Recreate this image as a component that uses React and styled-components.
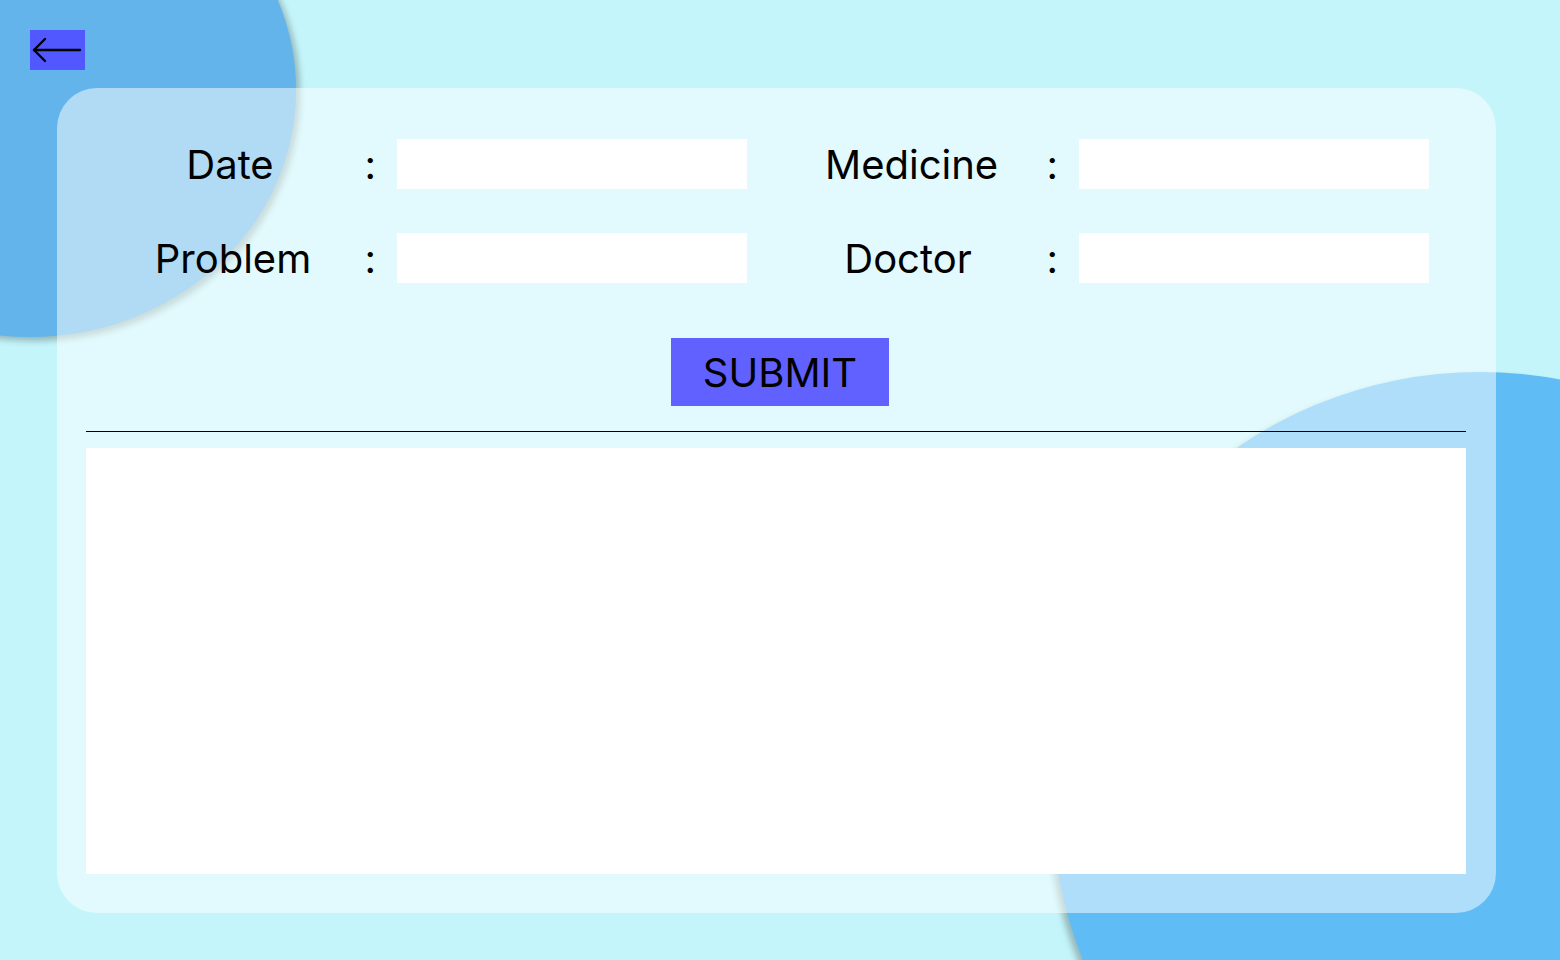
import React, { useState } from 'react';
import styled, { createGlobalStyle } from 'styled-components';

const GlobalStyle = createGlobalStyle`
	html, body {
		margin: 0;
		padding: 0;
	}
	body {
		font-family: Inter, "Noto Sans", sans-serif;
		color: #000;
	}
	* {
		box-sizing: border-box;
	}
`;

const Page = styled.div`
	position: relative;
	width: 100vw;
	height: 100vh;
	overflow: hidden;
	background: #c4f5fa;
`;

const Blob = styled.div`
	position: absolute;
	border-radius: 50%;
	background: ${({ color }) => color};
	box-shadow: ${({ shadow }) => shadow};
	width: ${({ w }) => w}px;
	height: ${({ h }) => h}px;
	left: ${({ x }) => x}px;
	top: ${({ y }) => y}px;
`;

const Main = styled.div`
	position: relative;
	z-index: 1;
	display: flex;
	flex-direction: column;
	align-items: flex-start;
	padding: 30px 0 0 30px;
`;

const BackButton = styled.button`
	display: flex;
	align-items: center;
	justify-content: center;
	width: 55px;
	height: 40px;
	padding: 0;
	border: none;
	background: #5158ff;
	cursor: pointer;
`;

const Card = styled.div`
	display: flex;
	flex-direction: column;
	width: 1439px;
	height: 825px;
	margin: 18px 0 0 27px;
	padding: 51px 30px 39px 29px;
	border-radius: 40px;
	background: rgba(255, 255, 255, 0.5);
`;

const Form = styled.div`
	display: grid;
	grid-template-columns: repeat(2, auto);
	justify-content: start;
	column-gap: 78px;
	row-gap: 44px;
	margin-left: 57px;
`;

const Field = styled.div`
	display: grid;
	grid-template-columns: 180px 74px 350px;
	align-items: center;
`;

const Label = styled.label`
	font-size: 40px;
	text-align: center;
	padding-right: ${({ shift }) => shift || 0}px;
`;

const Colon = styled.span`
	font-size: 40px;
	text-align: right;
	padding-right: 21px;
`;

const TextInput = styled.input`
	width: 350px;
	height: 50px;
	border: none;
	outline: none;
	background: #fff;
	padding: 0 12px;
	font-family: inherit;
	font-size: 24px;
`;

const SubmitButton = styled.button`
	width: 218px;
	height: 68px;
	margin: 55px 0 0 585px;
	border: none;
	background: #6161ff;
	color: #000;
	font-family: inherit;
	font-size: 40px;
	cursor: pointer;
`;

const Divider = styled.hr`
	width: 100%;
	height: 1px;
	margin: 25px 0 0;
	border: none;
	background: #000;
`;

const Results = styled.div`
	flex: 1;
	margin-top: 16px;
	background: #fff;
`;

const fields = [
	{ key: 'date', label: 'Date', shift: 6 },
	{ key: 'medicine', label: 'Medicine', shift: 20 },
	{ key: 'problem', label: 'Problem' },
	{ key: 'doctor', label: 'Doctor', shift: 14 },
];

export default () => {
	const [values, setValues] = useState({});
	return (
		<Page>
			<GlobalStyle />
			<Blob color="#62b4ea" w={532} h={494} x={-236} y={-157} shadow="4px 4px 6px rgba(0, 0, 0, 0.25)" />
			<Blob color="#5fbcf5" w={856} h={856} x={1052} y={372} shadow="-4px 4px 6px rgba(0, 0, 0, 0.25)" />
			<Main>
				<BackButton aria-label="Back">
					<svg width="55" height="40" viewBox="0 0 55 40" fill="none" stroke="#000" strokeWidth="2.4" strokeLinecap="round" strokeLinejoin="round">
						<path d="M4 20H50" />
						<path d="M15 9L4 20L15 31" />
					</svg>
				</BackButton>
				<Card>
					<Form>
						{fields.map((f) => (
							<Field key={f.key}>
								<Label shift={f.shift}>{f.label}</Label>
								<Colon>:</Colon>
								<TextInput
									value={values[f.key] || ''}
									onChange={(e) => setValues({ ...values, [f.key]: e.target.value })}
								/>
							</Field>
						))}
					</Form>
					<SubmitButton>SUBMIT</SubmitButton>
					<Divider />
					<Results />
				</Card>
			</Main>
		</Page>
	);
};
